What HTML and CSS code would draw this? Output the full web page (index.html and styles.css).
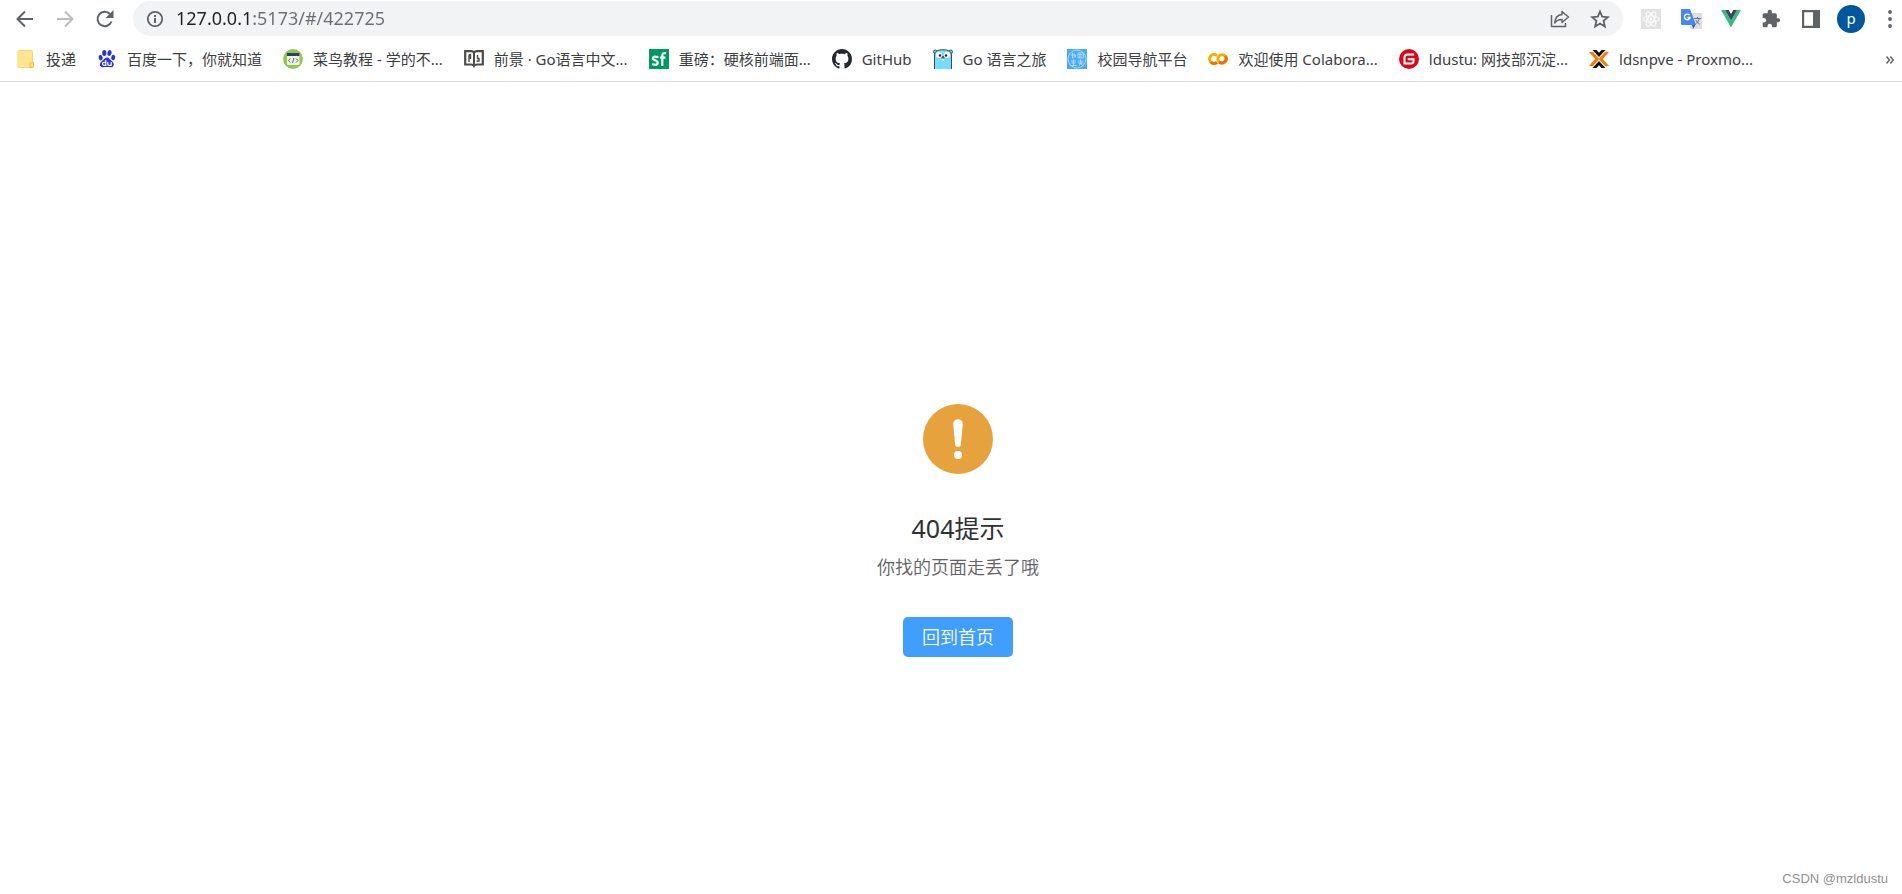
FILE: index.html
```html
<!DOCTYPE html>
<html lang="zh-CN">
<head>
  <meta charset="UTF-8">
  <title>404提示</title>
  <link rel="stylesheet" href="styles.css">
</head>
<body>

  <header>
    <div class="toolbar">
      <button class="tool" aria-label="后退">
        <svg width="20" height="20" viewBox="0 0 20 20" fill="none" stroke="#5f6368" stroke-width="2"><path d="M18 10H3M10 2.500L2.500 10L10 17.500"/></svg>
      </button>
      <button class="tool" aria-label="前进">
        <svg width="20" height="20" viewBox="0 0 20 20" fill="none" stroke="#babcbe" stroke-width="2"><path d="M2 10H17M10 2.500L17.500 10L10 17.500"/></svg>
      </button>
      <button class="tool" aria-label="重新加载">
        <svg width="20" height="20" viewBox="0 0 20 20"><path d="M16.500 12.500A7.200 7.200 0 1 1 15 5" fill="none" stroke="#5f6368" stroke-width="2"/><path d="M18.500 1V9H10.500Z" fill="#5f6368"/></svg>
      </button>

      <div class="omnibox">
        <svg width="18" height="18" viewBox="0 0 18 18"><circle cx="9" cy="9" r="7.200" fill="none" stroke="#5f6368" stroke-width="1.800"/><path d="M8 8H10V13H8ZM8 5H10V7H8Z" fill="#5f6368"/></svg>
        <input class="url" type="text" aria-label="地址" value="127.0.0.1:5173/#/422725">
        <button class="tool" aria-label="分享">
          <svg width="20" height="20" viewBox="0 0 20 20" fill="none" stroke="#5f6368" stroke-width="1.500" stroke-linejoin="round"><path d="M1.500 6V17.500H15.500V14"/><path d="M12 2.500L18.500 8L12 13.500V10.500C8.500 10.300 6.500 11.500 4.700 14C5 9.500 7.500 6 12 5.600Z"/></svg>
        </button>
        <button class="tool" aria-label="收藏">
          <svg width="20" height="20" viewBox="0 0 20 20" fill="none" stroke="#5f6368" stroke-width="1.800"><path d="M10 2.500L12.200 7.700L17.900 8.200L13.600 11.900L14.900 17.500L10 14.500L5.100 17.500L6.400 11.900L2.100 8.200L7.800 7.700Z"/></svg>
        </button>
      </div>

      <button class="tool" aria-label="React">
        <svg width="20" height="20" viewBox="0 0 20 20"><rect width="20" height="20" rx="1" fill="#e2e2e2"/><g fill="none" stroke="#fff" stroke-width="1"><ellipse cx="10" cy="10" rx="8" ry="3.200"/><ellipse cx="10" cy="10" rx="8" ry="3.200" transform="rotate(60 10 10)"/><ellipse cx="10" cy="10" rx="8" ry="3.200" transform="rotate(120 10 10)"/></g><circle cx="10" cy="10" r="1.500" fill="#fff"/></svg>
      </button>
      <button class="tool" aria-label="翻译">
        <svg width="21" height="20" viewBox="0 0 21 20"><rect x="9" y="4" width="12" height="16" rx="1" fill="#dedede"/><path d="M11 15H15L12 20Z" fill="#2953bd"/><path d="M1 0H9L15 16H1Q0 16 0 15V1Q0 0 1 0Z" fill="#4688f1"/><path d="M8.500 6.200A2.800 2.800 0 1 0 9 8.500H6.500" fill="none" stroke="#fff" stroke-width="1.400"/><path d="M13 9.500H20M16.500 8V9.500M18.500 9.500Q17.500 13 14.500 15M14.800 11Q16 13.500 18.800 15.300" fill="none" stroke="#607d8b" stroke-width="1"/></svg>
      </button>
      <button class="tool" aria-label="Vue">
        <svg width="20" height="18" viewBox="0 0 20 18"><path d="M0 0H4L10 10.400L16 0H20L10 17.500Z" fill="#41b883"/><path d="M4 0H7.700L10 4L12.300 0H16L10 10.400Z" fill="#35495e"/></svg>
      </button>
      <button class="tool" aria-label="扩展程序">
        <svg width="20" height="20" viewBox="0 0 24 24"><path d="M20.500 11H19V7a2 2 0 0 0-2-2h-4V3.500a2.500 2.500 0 0 0-5 0V5H4a2 2 0 0 0-2 2v3.800h1.500a2.700 2.700 0 0 1 0 5.400H2V20a2 2 0 0 0 2 2h3.800v-1.500a2.700 2.700 0 0 1 5.400 0V22H17a2 2 0 0 0 2-2v-4h1.500a2.500 2.500 0 0 0 0-5Z" fill="#5f6368"/></svg>
      </button>
      <button class="tool" aria-label="侧边栏">
        <svg width="18" height="18" viewBox="0 0 18 18"><path fill-rule="evenodd" d="M0 0H18V18H0ZM2.200 2.200V15.800H11V2.200Z" fill="#5f6368"/></svg>
      </button>
      <button class="tool" aria-label="用户"><span class="avatar">p</span></button>
      <button class="tool more" aria-label="菜单">
        <svg width="4" height="18" viewBox="0 0 4 18" fill="#5f6368"><circle cx="2" cy="2" r="1.900"/><circle cx="2" cy="9" r="1.900"/><circle cx="2" cy="16" r="1.900"/></svg>
      </button>
    </div>

    <nav class="bookmarks">
      <a href="#">
        <svg width="20" height="20" viewBox="0 0 20 20"><path d="M3 1.500H15Q16.500 1.500 16.500 3V18.500H3Q2 18.500 2 17.500V2.500Q2 1.500 3 1.500Z" fill="#ffe691" stroke="#f7d66a"/><path d="M14 18.500V15Q14 13.500 15.500 13.500H17.500V17Q17.500 18.500 16 18.500Z" fill="#ffdf72" stroke="#edbf3b"/></svg>
        <span>投递</span>
      </a>
      <a href="#">
        <svg width="20" height="20" viewBox="0 0 20 20" fill="#2932e1"><ellipse cx="3.700" cy="8.700" rx="2" ry="2.700" transform="rotate(-15 3.700 8.700)"/><ellipse cx="7.300" cy="4" rx="2.100" ry="2.900"/><ellipse cx="12.500" cy="4" rx="2.100" ry="2.900" transform="rotate(10 12.500 4)"/><ellipse cx="16.200" cy="8.500" rx="2" ry="2.700" transform="rotate(15 16.200 8.500)"/><path d="M10 8.500C12 8.500 13 10.500 15 12.200C18 14.800 17 18.500 13.500 18.300C11 18 9 18 6.500 18.300C2.500 18.500 1.500 14.800 5 12C7 10.500 8 8.500 10 8.500Z"/><path d="M8.800 11V16.300H7Q5.500 16.300 5.500 14.800Q5.500 13.300 7 13.300H8.800M10.800 13V15.300Q10.800 16.300 12 16.300H14.200V13" fill="none" stroke="#fff" stroke-width="1.200"/></svg>
        <span>百度一下，你就知道</span>
      </a>
      <a href="#">
        <svg width="20" height="20" viewBox="0 0 20 20"><circle cx="10" cy="10" r="9.900" fill="#8fc751"/><rect x="4" y="4" width="12.500" height="12" rx="1" fill="#f1f1e9"/><path d="M4 4H16.500V7H4Z" fill="#2d4355"/><path d="M7.500 9.500L5.500 11.500L7.500 13.500M13 9.500L15 11.500L13 13.500M11 9L9.500 14" fill="none" stroke="#51656f"/></svg>
        <span>菜鸟教程 - 学的不...</span>
      </a>
      <a href="#">
        <svg width="20" height="20" viewBox="0 0 20 20" fill="none" stroke="#4b4b49"><path d="M1.200 2.200H7Q9 2.200 10 3.500Q11 2.200 13 2.200H18.800V15.500H13Q11 15.500 10 17Q9 15.500 7 15.500H1.200Z" stroke-width="2.200"/><path d="M10 4V16" stroke-width="2"/><path d="M5 13V7Q5 5.500 6.500 5.500V10M13.500 6V9.500H15V12H12.500" stroke-width="1.400"/></svg>
        <span>前景 · Go语言中文...</span>
      </a>
      <a href="#">
        <svg width="20" height="20" viewBox="0 0 20 20"><rect width="20" height="20" fill="#009a61"/><path d="M9.500 8.200Q3.800 6.800 3.800 9.300C3.800 11.500 8.800 11.200 8.800 13.700Q8.800 16.700 3 15.300M13.300 17V6.500Q13.300 3.500 17 4.200M11 8.700H16.500" fill="none" stroke="#fff" stroke-width="2.200"/></svg>
        <span>重磅：硬核前端面...</span>
      </a>
      <a href="#">
        <svg width="20" height="20" viewBox="0 0 16 16"><path fill="#24292f" d="M8 0C3.580 0 0 3.580 0 8c0 3.540 2.290 6.530 5.470 7.590.4.070.55-.17.55-.38 0-.19-.01-.82-.01-1.490-2.010.37-2.530-.49-2.690-.94-.09-.23-.48-.94-.82-1.130-.28-.15-.68-.52-.01-.53.63-.01 1.080.58 1.230.82.72 1.210 1.870.87 2.330.66.07-.52.28-.87.51-1.070-1.780-.2-3.640-.89-3.640-3.950 0-.87.31-1.590.82-2.150-.08-.2-.36-1.020.08-2.120 0 0 .67-.21 2.200.82.64-.18 1.320-.27 2-.27s1.360.09 2 .27c1.530-1.040 2.200-.82 2.200-.82.44 1.100.16 1.920.08 2.120.51.56.82 1.270.82 2.150 0 3.070-1.870 3.750-3.650 3.950.29.25.54.73.54 1.480 0 1.070-.01 1.930-.01 2.200 0 .21.15.46.55.38A8.010 8.010 0 0 0 16 8c0-4.420-3.580-8-8-8Z"/></svg>
        <span>GitHub</span>
      </a>
      <a href="#">
        <svg width="20" height="20" viewBox="0 0 20 20"><circle cx="2.200" cy="2.700" r="1.700" fill="#74ddff" stroke="#394d54"/><circle cx="17.800" cy="2.700" r="1.700" fill="#74ddff" stroke="#394d54"/><path d="M1.500 20V6Q1.500 .7 10 .7Q18.500 .7 18.500 6V20" fill="#74ddff" stroke="#394d54"/><circle cx="6" cy="6" r="3" fill="#fff"/><circle cx="14" cy="6" r="3" fill="#fff"/><circle cx="7" cy="6.500" r="1.200" fill="#222"/><circle cx="13" cy="6.500" r="1.200" fill="#222"/><path d="M9 9.500H11V11.500H9Z" fill="#fff"/><ellipse cx="10" cy="9" rx="2.200" ry="1.200" fill="#c38c74"/><ellipse cx="10" cy="8" rx="1.200" ry=".8" fill="#222"/></svg>
        <span>Go 语言之旅</span>
      </a>
      <a href="#">
        <svg width="20" height="20" viewBox="0 0 20 20"><rect width="20" height="20" fill="#48a9f8"/><g fill="none" stroke="#c7e5fd" stroke-width=".8"><circle cx="10" cy="10" r="9"/><path d="M3.500 6H8M5.500 3.500V9.500M7 4.500L9 8.500M9 5.500L6.500 9M11 4H16.500V9H11ZM12 5.500H15.500M12 7H15.500M13 7V8.500M4 12H9M4.500 14H8.500M3.500 16.500H9.500M6.500 10.500V16.500M11 12H16.500M13.500 10.500V14.500M11 14H16.500M12 17L13.500 14L16 17"/></g></svg>
        <span>校园导航平台</span>
      </a>
      <a href="#">
        <svg width="20" height="20" viewBox="0 0 20 20" fill="none" stroke-width="3"><path d="M9 6.600A4.500 4.500 0 1 0 9 13.400" stroke="#f9ab00"/><path d="M3 13.200A4.500 4.500 0 0 0 9 13.400" stroke="#e8710a"/><circle cx="14.200" cy="10" r="4.300" stroke="#f9ab00"/><path d="M17.200 7A4.300 4.300 0 0 1 11.200 13" stroke="#e8710a"/></svg>
        <span>欢迎使用 Colabora...</span>
      </a>
      <a href="#">
        <svg width="20" height="20" viewBox="0 0 20 20"><circle cx="10" cy="10" r="10" fill="#d80a19"/><path d="M15.200 5.500H8.500Q5.500 5.500 5.500 8.500V14.500H12Q14.500 14.500 14.500 12V10.200H8.800" fill="none" stroke="#fff" stroke-width="2"/></svg>
        <span>ldustu: 网技部沉淀...</span>
      </a>
      <a href="#">
        <svg width="20" height="20" viewBox="0 0 20 20"><path d="M0 3H4L10.500 10L4 17H0L6.200 10ZM20 3H16L9.500 10L16 17H20L13.800 10Z" fill="#f57c00"/><path d="M3.500 1H7.500L10 3.700L12.500 1H16.500L10 8ZM3.500 19H7.500L10 16.300L12.500 19H16.500L10 12Z" fill="#111"/></svg>
        <span>ldsnpve - Proxmo...</span>
      </a>
      <button class="overflow" aria-label="更多书签">
        <svg width="8" height="8" viewBox="0 0 8 8" fill="none" stroke="#5f6368" stroke-width="1.500"><path d="M.5 .5L3.500 4L.5 7.500M4.300 .5L7.300 4L4.300 7.500"/></svg>
      </button>
    </nav>
  </header>

  <main class="result">
    <svg class="result-icon" width="70" height="70" viewBox="0 0 70 70"><circle cx="35" cy="35" r="35" fill="#e6a23c"/><path d="M30.200 20A4.800 4.800 0 0 1 39.800 20L37.900 40A2.900 2.900 0 0 1 32.100 40Z" fill="#fff"/><circle cx="35" cy="51" r="4.100" fill="#fff"/></svg>
    <h1>404提示</h1>
    <p>你找的页面走丢了哦</p>
    <button class="home">回到首页</button>
  </main>

  <div class="watermark">CSDN @mzldustu</div>

</body>
</html>
```
FILE: styles.css
```css
body {
  margin: 0;
  min-height: 100vh;
  display: flex;
  flex-direction: column;
  background-color: #fff;
  font-family: "Noto Sans", "Noto Sans CJK SC", sans-serif;
}

button {
  border: none;
  padding: 0;
  background: none;
  font-family: inherit;
  cursor: pointer;
}

header {
  border-bottom: 1px solid #d9dadc;
}

.toolbar {
  display: flex;
  align-items: center;
  padding: 1px 0 0 5px;
}

.tool {
  display: flex;
  align-items: center;
  justify-content: center;
  flex: none;
  width: 40px;
  height: 34px;
}

.omnibox {
  display: flex;
  align-items: center;
  flex: 1;
  height: 35px;
  margin: 0 8px;
  padding: 0 3px 0 13px;
  border-radius: 18px;
  background-color: #f1f3f4;
}

/* host in dark, the rest of the address in grey */
.url {
  flex: 1;
  min-width: 0;
  margin-left: 12px;
  padding: 0 0 2px;
  border: none;
  outline: none;
  font-family: inherit;
  font-size: 18px;
  line-height: 28px;
  color: transparent;
  background: linear-gradient(to right, #202124 74px, #6a6e73 74px);
  -webkit-background-clip: text;
  background-clip: text;
}

.avatar {
  width: 28px;
  height: 28px;
  border-radius: 50%;
  background-color: #01579b;
  color: #fff;
  font-size: 15px;
  line-height: 26px;
}

.more {
  width: 24px;
  margin-left: 7px;
}

.bookmarks {
  display: flex;
  align-items: center;
  gap: 21px;
  height: 45px;
  padding: 0 8px 0 16px;
}

.bookmarks a {
  display: flex;
  align-items: center;
  gap: 10px;
  color: #3c4043;
  font-size: 15px;
  line-height: 20px;
  white-space: nowrap;
  text-decoration: none;
}

.overflow {
  margin-left: auto;
}

.result {
  flex: 1;
  display: flex;
  flex-direction: column;
  align-items: center;
  justify-content: center;
  padding: 85px 0 0 14px;
}

h1 {
  margin: 38px 0 0;
  font-size: 25px;
  font-weight: normal;
  line-height: 32px;
  color: #303133;
}

.result p {
  margin: 11px 0 0;
  font-size: 18px;
  font-weight: 350;
  line-height: 24px;
  color: #606266;
}

.home {
  height: 40px;
  margin-top: 38px;
  padding: 0 19px 2px;
  border-radius: 5px;
  background-color: #409eff;
  color: #fff;
  font-size: 18px;
  font-weight: 350;
}

.watermark {
  position: absolute;
  right: 14px;
  bottom: 6px;
  font-family: "Liberation Sans", sans-serif;
  font-size: 13px;
  line-height: 18px;
  color: #909090;
}
```
